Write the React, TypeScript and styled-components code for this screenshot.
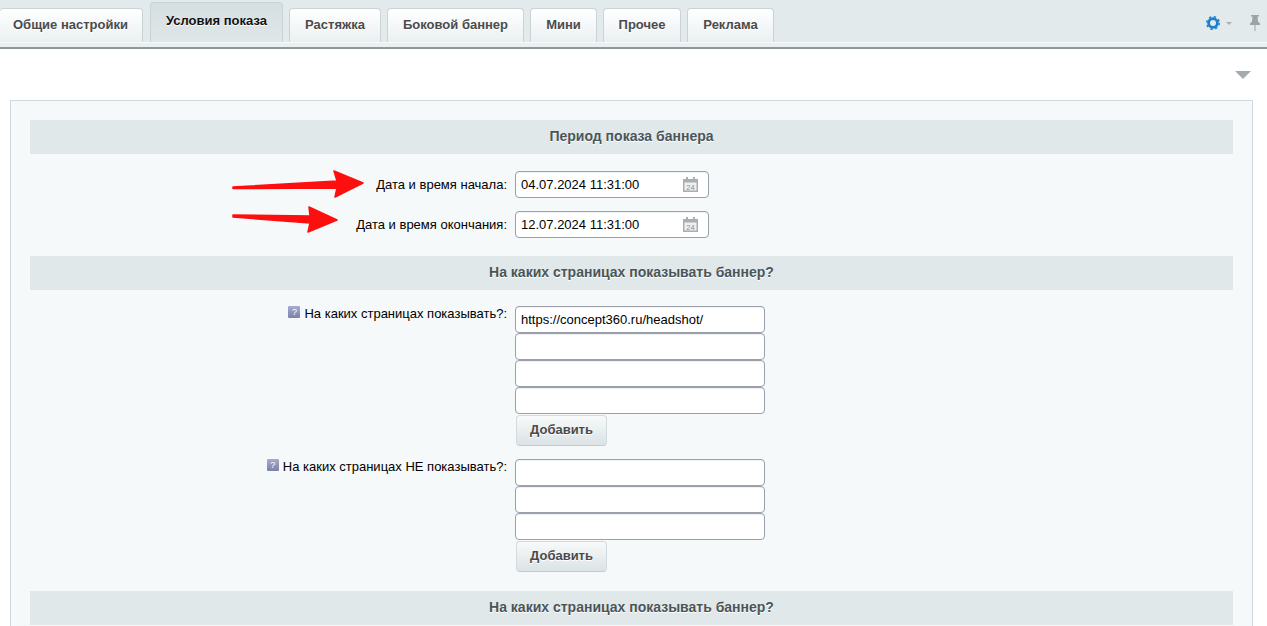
import React from "react";
import styled, { createGlobalStyle } from "styled-components";

const GlobalStyle = createGlobalStyle`
  html, body {
    margin: 0;
    padding: 0;
    background: #fff;
    overflow: hidden;
  }
  body {
    font-family: "Liberation Sans", Arial, sans-serif;
    font-size: 13px;
    color: #000;
  }
`;

const Page = styled.div`
  position: relative;
  width: 1267px;
  height: 626px;
  overflow: hidden;
`;

const TabBar = styled.div`
  height: 42px;
  display: flex;
  align-items: flex-end;
  gap: 6px;
  background: #e3eaec;
`;

const Tab = styled.div<{ $active?: boolean; $width: number }>`
  box-sizing: border-box;
  width: ${(p) => p.$width}px;
  height: ${(p) => (p.$active ? 40 : 34)}px;
  margin-left: ${(p) => (p.$active ? 1 : 0)}px;
  display: flex;
  align-items: center;
  justify-content: center;
  padding-bottom: ${(p) => (p.$active ? 4 : 2)}px;
  border: 1px solid #c9d3d6;
  border-bottom: none;
  border-radius: 4px 4px 0 0;
  background: ${(p) =>
    p.$active
      ? "linear-gradient(to bottom, #d5dfe2, #dfe6e8)"
      : "linear-gradient(to bottom, #ffffff, #eaf0f1)"};
  font-size: 13px;
  font-weight: bold;
  color: ${(p) => (p.$active ? "#111" : "#4b4b4b")};
  text-shadow: 0 1px 0 #fff;

  &:first-child {
    border-left: none;
    padding-right: 1px;
  }
`;

const TabTools = styled.div`
  margin-left: auto;
  height: 42px;
  display: flex;
  align-items: center;
  padding-right: 6px;
`;

const GearIcon = styled.svg`
  margin-top: 4px;
`;

const Caret = styled.span`
  width: 0;
  height: 0;
  margin: 4px 17px 0 6px;
  border-left: 3px solid transparent;
  border-right: 3px solid transparent;
  border-top: 3px solid #a9b2b5;
`;

const PinSvg = styled.svg`
  margin-top: 3px;
`;

const TabLine = styled.div`
  height: 7px;
  box-sizing: border-box;
  background: #e9f0f1;
  border-top: 1px solid #f6f9f9;
  border-bottom: 2px solid #8f979a;
`;

const Collapse = styled.div`
  display: flex;
  justify-content: flex-end;
  height: 51px;
  padding-right: 16px;
  box-sizing: border-box;
`;

const CollapseArrow = styled.span`
  width: 0;
  height: 0;
  margin-top: 22px;
  border-left: 8px solid transparent;
  border-right: 8px solid transparent;
  border-top: 8px solid #a3abae;
`;

const Panel = styled.div`
  margin: 0 14px 0 10px;
  padding: 19px;
  background: #f5f9f9;
  border: 1px solid #ced9de;
`;

const SectionHead = styled.div<{ $mb: number }>`
  height: 34px;
  line-height: 33px;
  margin-bottom: ${(p) => p.$mb}px;
  text-align: center;
  background: #e0e8ea;
  font-size: 14px;
  font-weight: bold;
  color: #4b5558;
  text-shadow: 0 1px 0 #fff;
`;

const Row = styled.div<{ $mb: number }>`
  display: grid;
  grid-template-columns: 477px 1fr;
  column-gap: 8px;
  margin-bottom: ${(p) => p.$mb}px;
`;

const Label = styled.div<{ $top: number }>`
  display: flex;
  justify-content: flex-end;
  align-items: center;
  height: 15px;
  padding-top: ${(p) => p.$top}px;
  font-size: 13px;
  color: #000;
`;

const Hint = styled.span`
  box-sizing: border-box;
  width: 12px;
  height: 12px;
  margin: -3px 4px 0 0;
  display: inline-flex;
  align-items: center;
  justify-content: center;
  border-radius: 1px;
  background: linear-gradient(to bottom, #a6acd0, #7c82a8);
  font-size: 9px;
  line-height: 1;
  color: #fff;
`;

const Field = styled.div<{ $width: number }>`
  box-sizing: border-box;
  position: relative;
  width: ${(p) => p.$width}px;
  height: 27px;
  padding: 0 5px;
  display: flex;
  align-items: center;
  background: #fff;
  border: 1px solid #9aa1ad;
  border-radius: 4px;
  box-shadow: inset 0 1px 1px #eef0f2;
  font-size: 13px;
  color: #000;
`;

const CalendarSlot = styled.span`
  position: absolute;
  right: 10px;
  top: 5px;
  display: flex;
`;

const FieldStack = styled.div`
  display: flex;
  flex-direction: column;
  align-items: flex-start;
`;

const AddButton = styled.div`
  box-sizing: border-box;
  width: 91px;
  height: 31px;
  margin: 1px 0 0 1px;
  padding-bottom: 2px;
  display: flex;
  align-items: center;
  justify-content: center;
  border: 1px solid #d3dbde;
  border-bottom-color: #c3cdd1;
  border-radius: 4px;
  background: linear-gradient(to bottom, #f8fafa, #dbe3e6);
  font-size: 13px;
  font-weight: bold;
  color: #4a4a4a;
  text-shadow: 0 1px 0 #fff;
`;

const ArrowMark = styled.svg<{ $left: number; $top: number }>`
  position: absolute;
  left: ${(p) => p.$left}px;
  top: ${(p) => p.$top}px;
`;

const CalendarIcon = () => (
  <svg width="15" height="15" viewBox="0 0 15 15">
    <rect x="0" y="2" width="15" height="13" fill="#a9aeb0" />
    <rect x="1.5" y="5.5" width="12" height="8" fill="#eef0f0" />
    <rect x="3" y="0" width="2" height="3" fill="#a9aeb0" />
    <rect x="10" y="0" width="2" height="3" fill="#a9aeb0" />
    <text x="7.5" y="12.5" fontSize="7.5" textAnchor="middle" fill="#8a8f91" fontFamily="Liberation Sans">
      24
    </text>
  </svg>
);

const Gear = () => (
  <GearIcon width="14" height="14" viewBox="0 0 14 14">
    <circle cx="7" cy="7" r="4.4" fill="none" stroke="#1b7fce" strokeWidth="2.8" />
    <circle cx="7" cy="7" r="6.3" fill="none" stroke="#1b7fce" strokeWidth="1.4" strokeDasharray="2.4 2.55" />
  </GearIcon>
);

const PinIcon = () => (
  <PinSvg width="12" height="16" viewBox="0 0 12 16">
    <path d="M2 0h8v1.5H8.5l.5 5 2 2V10H1V8.5l2-2 .5-5H2z" fill="#9ba3a6" />
    <rect x="5.5" y="10" width="1" height="6" fill="#9ba3a6" />
  </PinSvg>
);

const tabs = [
  { title: "Общие настройки", width: 143 },
  { title: "Условия показа", width: 133, active: true },
  { title: "Растяжка", width: 92 },
  { title: "Боковой баннер", width: 137 },
  { title: "Мини", width: 67 },
  { title: "Прочее", width: 78 },
  { title: "Реклама", width: 87 },
];

const App = () => {
  return (
    <Page>
      <GlobalStyle />
      <TabBar>
        {tabs.map((tab) => (
          <Tab key={tab.title} $active={tab.active} $width={tab.width}>
            {tab.title}
          </Tab>
        ))}
        <TabTools>
          <Gear />
          <Caret />
          <PinIcon />
        </TabTools>
      </TabBar>
      <TabLine />
      <Collapse>
        <CollapseArrow />
      </Collapse>
      <Panel>
        <SectionHead $mb={17}>Период показа баннера</SectionHead>
        <Row $mb={13}>
          <Label $top={6}>Дата и время начала:</Label>
          <Field $width={194}>
            04.07.2024 11:31:00
            <CalendarSlot>
              <CalendarIcon />
            </CalendarSlot>
          </Field>
        </Row>
        <Row $mb={18}>
          <Label $top={6}>Дата и время окончания:</Label>
          <Field $width={194}>
            12.07.2024 11:31:00
            <CalendarSlot>
              <CalendarIcon />
            </CalendarSlot>
          </Field>
        </Row>
        <SectionHead $mb={16}>На каких страницах показывать баннер?</SectionHead>
        <Row $mb={13}>
          <Label $top={0}>
            <Hint>?</Hint>На каких страницах показывать?:
          </Label>
          <FieldStack>
            <Field $width={250}>https://concept360.ru/headshot/</Field>
            <Field $width={250} />
            <Field $width={250} />
            <Field $width={250} />
            <AddButton>Добавить</AddButton>
          </FieldStack>
        </Row>
        <Row $mb={19}>
          <Label $top={0}>
            <Hint>?</Hint>На каких страницах НЕ показывать?:
          </Label>
          <FieldStack>
            <Field $width={250} />
            <Field $width={250} />
            <Field $width={250} />
            <AddButton>Добавить</AddButton>
          </FieldStack>
        </Row>
        <SectionHead $mb={0}>На каких страницах показывать баннер?</SectionHead>
      </Panel>
      <ArrowMark $left={230} $top={168} width="136" height="32" viewBox="0 0 136 32">
        <path d="M3 19 L107 13 L104 3 L133 15 L105 29 L107 20 L3 20.5 Z" fill="#fe0f0f" stroke="#fe0f0f" strokeWidth="1.5" strokeLinejoin="round" />
      </ArrowMark>
      <ArrowMark $left={230} $top={205} width="112" height="30" viewBox="0 0 112 30">
        <path d="M3 10 L80 11 L79 2 L107 15 L78 27 L80 18 L3 12 Z" fill="#fe0f0f" stroke="#fe0f0f" strokeWidth="1.5" strokeLinejoin="round" />
      </ArrowMark>
    </Page>
  );
};

export default App;
